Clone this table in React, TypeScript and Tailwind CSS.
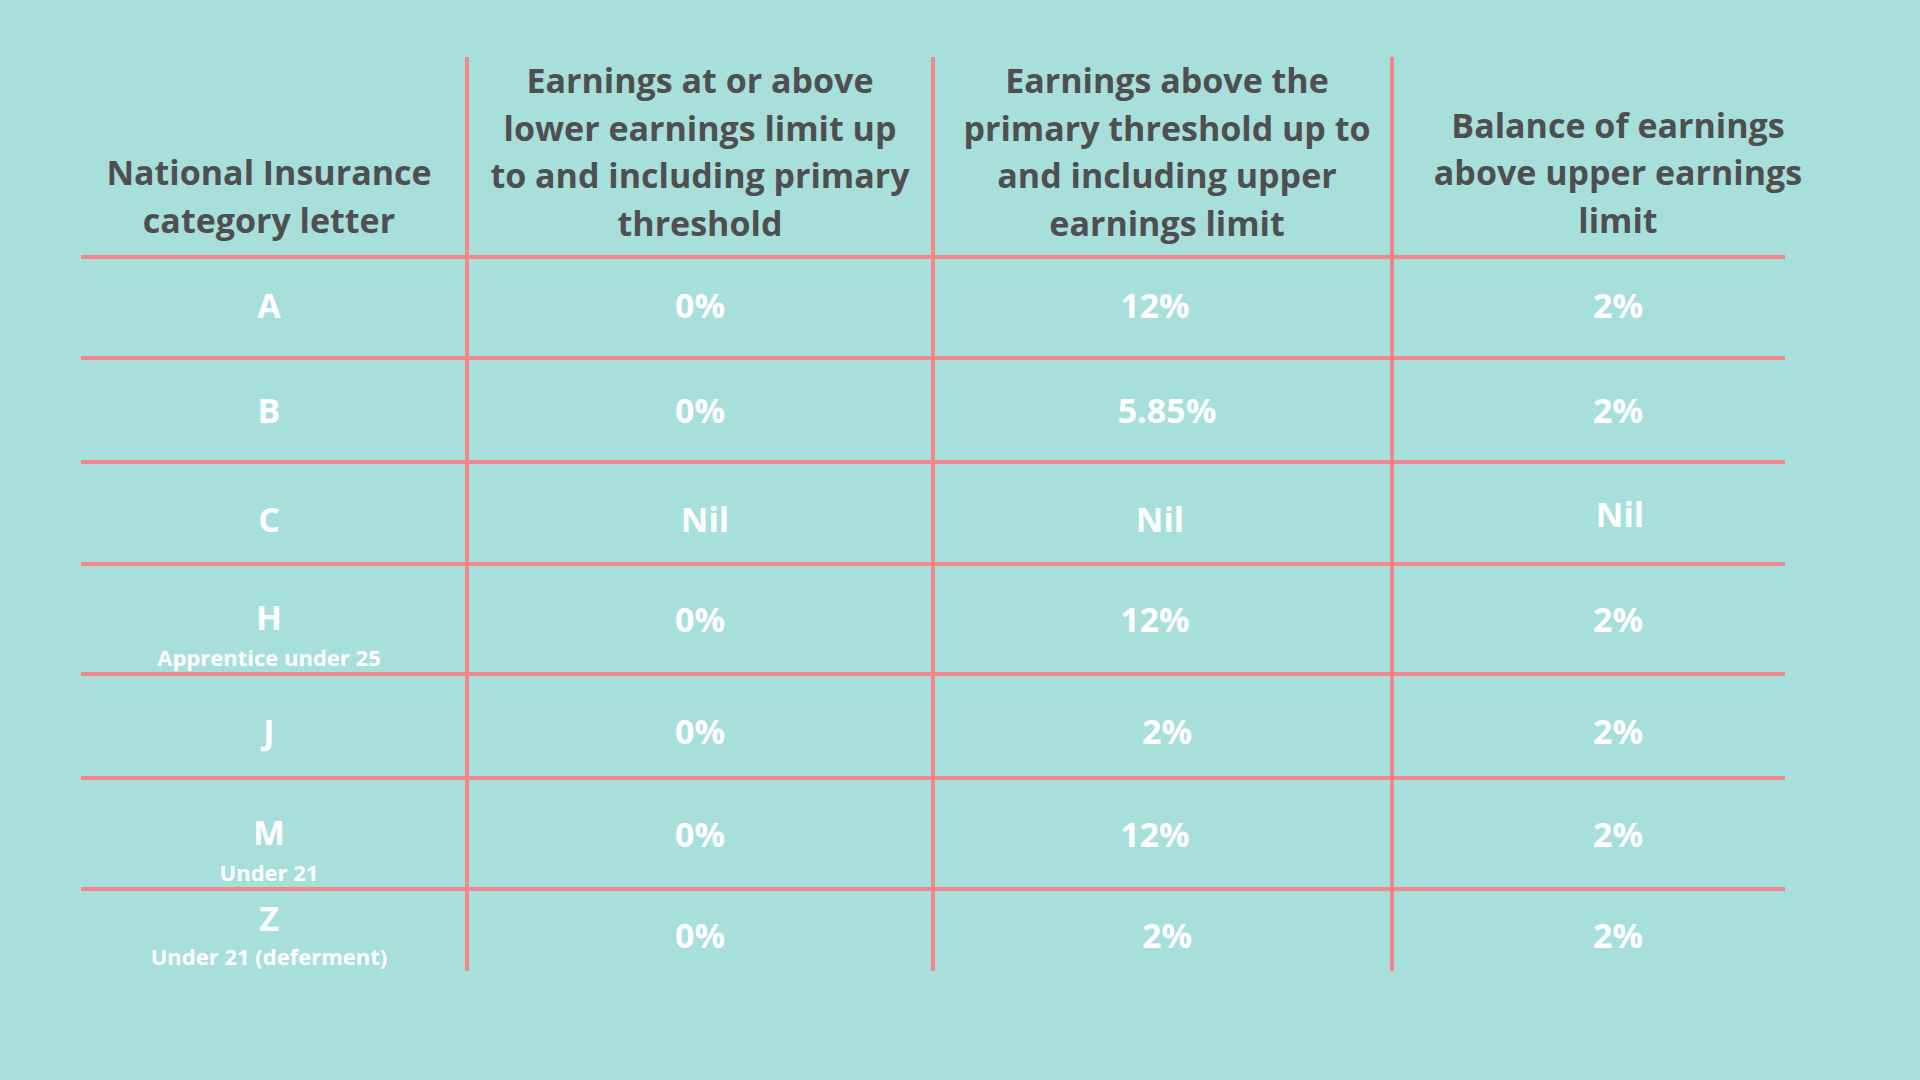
import React from "react";

type Row = {
  letter: string;
  sub?: string;
  h: string;
  lcls?: string;
  c2: React.ReactNode;
  c3: React.ReactNode;
  c4: React.ReactNode;
};

const HLine = () => <div className="h-[4px] w-[1704px] bg-[#f4868b]" />;

const Val = ({ children, cls = "" }: { children: React.ReactNode; cls?: string }) => (
  <span className={`text-[34px] leading-[46px] text-white ${cls}`}>{children}</span>
);

export default function App() {
  const rows: Row[] = [
    { letter: "A", h: "h-[97px]", lcls: "mb-[5px]", c2: <Val cls="mb-[5px]">0%</Val>, c3: <Val cls="mr-[24px] mb-[5px]">12%</Val>, c4: <Val cls="mb-[5px]">2%</Val> },
    { letter: "B", h: "h-[100px]", c2: <Val>0%</Val>, c3: <Val>5.85%</Val>, c4: <Val>2%</Val> },
    { letter: "C", h: "h-[98px]", lcls: "mt-[12px]", c2: <Val cls="ml-[10px] mt-[12px]">Nil</Val>, c3: <Val cls="mr-[14px] mt-[12px]">Nil</Val>, c4: <Val cls="ml-[4px] mt-[2px]">Nil</Val> },
    { letter: "H", sub: "Apprentice under 25", h: "h-[106px]", c2: <Val>0%</Val>, c3: <Val cls="mr-[24px]">12%</Val>, c4: <Val>2%</Val> },
    { letter: "J", h: "h-[100px]", lcls: "mt-[10px]", c2: <Val cls="mt-[10px]">0%</Val>, c3: <Val cls="mt-[10px]">2%</Val>, c4: <Val cls="mt-[10px]">2%</Val> },
    { letter: "M", sub: "Under 21", h: "h-[107px]", c2: <Val>0%</Val>, c3: <Val cls="mr-[24px]">12%</Val>, c4: <Val>2%</Val> },
    { letter: "Z", sub: "Under 21 (deferment)", h: "h-[80px]", c2: <Val cls="mt-[8px]">0%</Val>, c3: <Val cls="mt-[8px]">2%</Val>, c4: <Val cls="mt-[8px]">2%</Val> },
  ];

  const grid = "grid grid-cols-[384px_466px_459px_452px]";
  const bl = "border-l-[4px] border-[#f4868b]";

  return (
    <div
      className="w-[1920px] h-[1080px] bg-[#a7dfda] font-bold overflow-hidden"
      style={{ fontFamily: '"Open Sans", "Liberation Sans", sans-serif' }}
    >
      <div className="pt-[57px] pl-[81px] flex flex-col">
        {/* Header */}
        <div className={`${grid} h-[198px] text-[34px] leading-[47.5px] text-[#4f4f4f] text-center whitespace-nowrap`}>
          <div className="flex items-end justify-center pb-[35px] pr-[8px]">
            <div>
              National Insurance
              <br />
              category letter
            </div>
          </div>
          <div className={`${bl} flex items-end justify-center pb-[32px]`}>
            <div>
              Earnings at or above
              <br />
              lower earnings limit up
              <br />
              to and including primary
              <br />
              threshold
            </div>
          </div>
          <div className={`${bl} flex items-end justify-center pb-[32px] pl-[9px]`}>
            <div>
              Earnings above the
              <br />
              primary threshold up to
              <br />
              and including upper
              <br />
              earnings limit
            </div>
          </div>
          <div className={`${bl} flex items-end justify-center pb-[35px]`}>
            <div>
              Balance of earnings
              <br />
              above upper earnings
              <br />
              limit
            </div>
          </div>
        </div>
        <HLine />
        {rows.map((r, i) => (
          <React.Fragment key={r.letter}>
            <div className={`${grid} ${r.h}`}>
              <div
                className={`flex flex-col items-center pr-[8px] text-white ${
                  r.sub ? "justify-end" : "justify-center"
                }`}
              >
                <span className={`text-[34px] leading-[46px] ${r.lcls ?? ""}`}>{r.letter}</span>
                {r.sub && (
                  <span className={`text-[22px] leading-[30px] ${r.letter === "Z" ? "mb-[0px]" : "mt-[2px]"}`}>{r.sub}</span>
                )}
              </div>
              <div className={`${bl} flex items-center justify-center`}>{r.c2}</div>
              <div className={`${bl} flex items-center justify-center pl-[9px]`}>{r.c3}</div>
              <div className={`${bl} flex items-center justify-center`}>{r.c4}</div>
            </div>
            {i < rows.length - 1 && <HLine />}
          </React.Fragment>
        ))}
      </div>
    </div>
  );
}
